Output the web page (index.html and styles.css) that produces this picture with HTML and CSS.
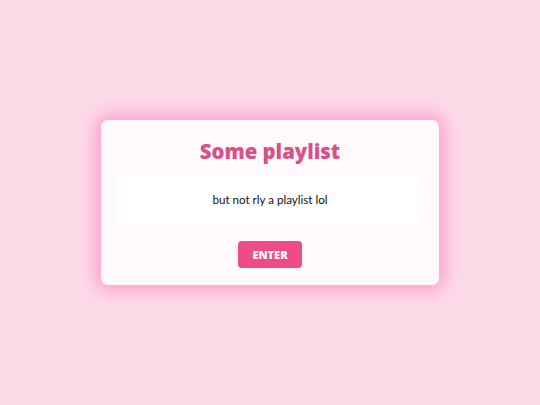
FILE: index.html
```html
<!DOCTYPE html>
<html lang="en">
<head>
    <meta charset="UTF-8">
    <title>Some playlist</title>
    <link rel="stylesheet" href="styles.css">
</head>
<body>
    <!-- main card -->
    <div class="card">
        <h1 class="title">Some playlist</h1>

        <!-- description box -->
        <div class="message">but not rly a playlist lol</div>

        <button class="enter-btn">ENTER</button>
    </div>
</body>
</html>
```

FILE: styles.css
```css
/* whole page */
body {
    margin: 0;
    height: 100vh;
    background: #fcdbe9;
    font-family: "Open Sans", "Noto Sans", sans-serif;
    display: flex;
    justify-content: center;
    align-items: center;
}

/* main card */
.card {
    width: 306px;
    padding: 16px 16px 17px;
    background: #fff9fc;
    border-radius: 7px;
    box-shadow: 0 0 18px 5px rgba(255, 110, 180, 0.6);
    display: flex;
    flex-direction: column;
    align-items: center;
}

.title {
    margin: 0 0 9px;
    font-size: 20.3px;
    font-weight: 800;
    line-height: 30px;
    color: #d94f89;
}

/* white box with the text */
.message {
    align-self: stretch;
    height: 49px;
    background: #ffffff;
    border-radius: 4px;
    display: flex;
    justify-content: center;
    align-items: center;
    font-family: Lato, "Open Sans", sans-serif;
    font-size: 11.6px;
    color: #111;
}

.enter-btn {
    margin-top: 17px;
    width: 64px;
    height: 27px;
    border: none;
    border-radius: 4px;
    background: #ef4b88;
    color: white;
    font-family: inherit;
    font-size: 11px;
    font-weight: 800;
    cursor: pointer;
}
```
